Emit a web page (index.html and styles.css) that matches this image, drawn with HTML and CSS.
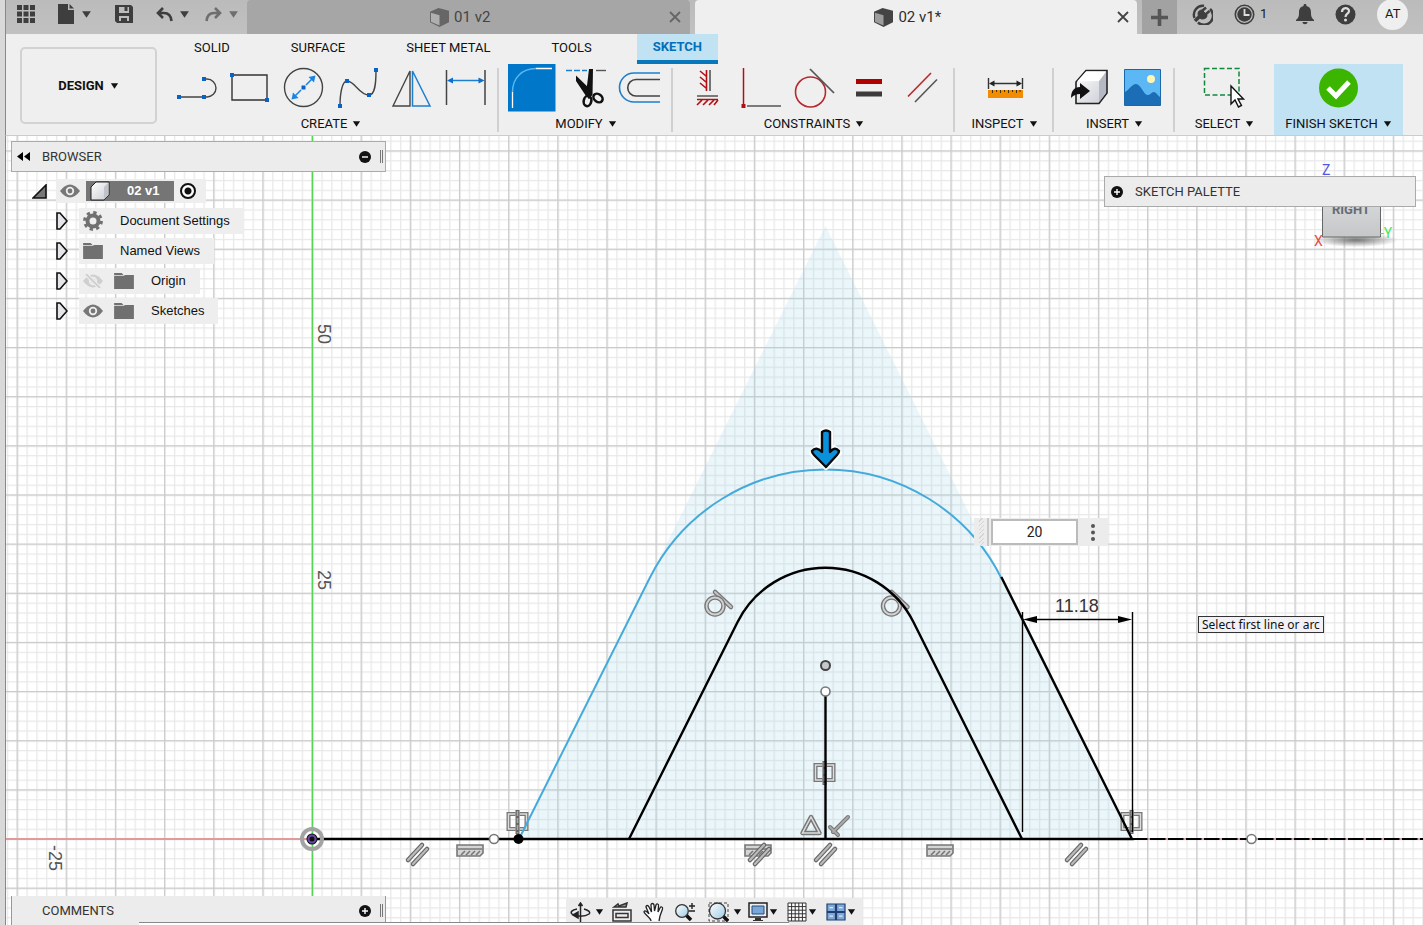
FILE: index.html
```html
<!DOCTYPE html>
<html lang="en">
<head>
<meta charset="utf-8">
<title>02 v1*</title>
<link rel="stylesheet" href="styles.css">
</head>
<body>
<svg class="defs" aria-hidden="true">
  <defs>
    <linearGradient id="cubeFace" x1="0" y1="0" x2="1" y2="1"><stop offset="0" stop-color="#fff"/><stop offset="1" stop-color="#c9ccd3"/></linearGradient>
    <linearGradient id="lens" x1="0" y1="0" x2="1" y2="1"><stop offset="0" stop-color="#fff"/><stop offset="1" stop-color="#9ccbe4"/></linearGradient>
  </defs>
  <symbol id="caret" viewBox="0 0 10 8"><path d="M1 1h8L5 7z" fill="currentColor"/></symbol>
  <symbol id="cube" viewBox="0 0 22 20"><path d="M1 4 10 0l11 3v12l-10 5L1 15z" fill="currentColor"/><path d="M2 5l9 2.500v11L2 14.500z" fill="#fff" opacity=".48"/></symbol>
  <symbol id="close" viewBox="0 0 12 12"><path d="M1 1l10 10M11 1 1 11" stroke="currentColor" stroke-width="1.800" fill="none"/></symbol>
  <symbol id="eye" viewBox="0 0 20 14"><path d="M0 7Q10-6 20 7 10 20 0 7z" fill="currentColor"/><circle cx="10" cy="7" r="4.200" fill="#eee"/><circle cx="10" cy="7" r="2.400" fill="currentColor"/></symbol>
  <symbol id="folder" viewBox="0 0 21 17"><path d="M0 0h8l2 2H0z" fill="currentColor"/><path d="M0 3h10l2-1h9v15H0z" fill="currentColor"/></symbol>
  <symbol id="expand" viewBox="0 0 12 18"><path d="M1 1h3l7 8-7 8H1z" fill="#e6e6ea" stroke="#111" stroke-width="1.600"/></symbol>
  <symbol id="plus-dot" viewBox="0 0 12 12"><circle cx="6" cy="6" r="6"/><path d="M6 3v6M3 6h6" stroke="#fff" stroke-width="1.400"/></symbol>
  <symbol id="minus-dot" viewBox="0 0 12 12"><circle cx="6" cy="6" r="6"/><path d="M3 6h6" stroke="#fff" stroke-width="1.400"/></symbol>
</svg>

<header class="topbar">
  <div class="quick">
    <button class="bare" aria-label="Data panel"><svg width="18" height="18" fill="#3e3e3e"><path d="M0 0h5v5H0zM6.500 0h5v5h-5zM13 0h5v5h-5zM0 6.500h5v5H0zM6.500 6.500h5v5h-5zM13 6.500h5v5h-5zM0 13h5v5H0zM6.500 13h5v5h-5zM13 13h5v5h-5z"/></svg></button>
    <button class="bare pair" aria-label="File"><svg width="17" height="20" fill="#3e3e3e"><path d="M0 0h10v6h6v14H0z"/><path d="M11.500 0 16 4.500h-4.500z"/></svg><svg class="caret"><use href="#caret"/></svg></button>
    <button class="bare" aria-label="Save"><svg width="18" height="18"><path d="M0 0h16l2 2v16H2l-2-2z" fill="#3e3e3e"/><path d="M4 2h10v6H4z" fill="#bdbdbd"/><path d="M9.500 2h3v4h-3z" fill="#3e3e3e"/><path d="M4 11h10v5H4z" fill="#bdbdbd"/><path d="M6 13h6v3H6z" fill="#3e3e3e"/></svg></button>
    <button class="bare pair" aria-label="Undo"><svg width="17" height="15" fill="none" stroke="#3e3e3e" stroke-width="2.600"><path d="M7 1 2 6l5 5M2 6h6c5 0 7 3 7.500 8"/></svg><svg class="caret"><use href="#caret"/></svg></button>
    <button class="bare pair faded" aria-label="Redo"><svg width="17" height="15" fill="none" stroke="#6e6e6e" stroke-width="2.600"><path d="M10 1l5 5-5 5M15 6H9c-5 0-7 3-7.500 8"/></svg><svg class="caret"><use href="#caret"/></svg></button>
  </div>
  <nav class="doc-tabs" aria-label="Documents">
    <div class="doc-tab"><button class="bare doc-name"><svg width="21" height="19"><use href="#cube"/></svg>01 v2</button><button class="bare doc-close" aria-label="Close 01 v2"><svg width="12" height="12"><use href="#close"/></svg></button></div>
    <div class="doc-tab current"><button class="bare doc-name"><svg width="21" height="19"><use href="#cube"/></svg>02 v1*</button><button class="bare doc-close" aria-label="Close 02 v1"><svg width="12" height="12"><use href="#close"/></svg></button></div>
  </nav>
  <div class="session">
    <button class="bare new-tab" aria-label="New design"><svg width="17" height="17"><path d="M8.500 0v17M0 8.500h17" stroke="#555" stroke-width="3.600"/></svg></button>
    <button class="bare" aria-label="Extensions"><svg width="21" height="21" fill="none" stroke="#3e3e3e"><path d="M2.500 14A9 9 0 0 1 12 1.800M18 5A9 9 0 0 1 6 18.500" stroke-width="2.400"/><path d="M3 17l4-4" stroke-width="3.500"/><path d="M6 10c0-3 2-4 4-4l5 5c0 3-2 4-5 4-2 0-4-2-4-5z" fill="#3e3e3e"/><path d="M10 7l4-3.500M13.500 10.500l4-3.500" stroke-width="2.400"/></svg></button>
    <button class="bare jobs" aria-label="Job status"><svg width="21" height="21"><circle cx="10.500" cy="10.500" r="9.200" fill="none" stroke="#3e3e3e" stroke-width="1.600"/><circle cx="10.500" cy="10.500" r="7.200" fill="#3e3e3e"/><path d="M10.500 5v6h5" fill="none" stroke="#ddd" stroke-width="1.800"/></svg>1</button>
    <button class="bare bell" aria-label="Notifications"><svg width="18" height="21" fill="#3e3e3e"><path d="M9 0c1 0 1.500.5 1.500 2C14 3 15 5 15 9c0 4 1 5 3 7v1H0v-1c2-2 3-3 3-7 0-4 1-6 4.500-7C7.500.5 8 0 9 0zM6.500 18h5c0 3-5 3-5 0z"/></svg></button>
    <button class="bare help" aria-label="Help"><svg width="21" height="21"><circle cx="10.500" cy="10.500" r="10" fill="#3e3e3e"/><path d="M7 8c0-5 7-5 7-1 0 3-3.500 2.500-3.500 6" fill="none" stroke="#ddd" stroke-width="2.200"/><circle cx="10.500" cy="16" r="1.500" fill="#ddd"/></svg></button>
    <button class="bare avatar">AT</button>
  </div>
</header>

<div class="ribbon">
  <button class="design">DESIGN <svg class="caret small"><use href="#caret"/></svg></button>
  <div class="ribbon-main">
    <nav class="modes" aria-label="Toolbar tabs">
      <button class="bare mode">SOLID</button><button class="bare mode">SURFACE</button><button class="bare mode">SHEET METAL</button><button class="bare mode">TOOLS</button><button class="bare mode current">SKETCH</button>
    </nav>
    <div class="groups">
      <section class="group">
        <div class="icons">
          <button class="bare tool" aria-label="Line"><svg class="ico"><path d="M7 33h25M32 15h3a9 9 0 0 1 0 18h-3" fill="none" stroke="#444" stroke-width="1.400"/><path d="M5 31h4v4H5zM30 31h4v4h-4zM30 13h4v4h-4z" fill="#0a63c4"/></svg></button>
          <button class="bare tool" aria-label="Rectangle"><svg class="ico"><path d="M6 11h35v25H6z" fill="none" stroke="#333" stroke-width="1.400"/><path d="M4 9h4v4H4zM39 34h4v4h-4z" fill="#0a63c4"/></svg></button>
          <button class="bare tool" aria-label="Circle"><svg class="ico"><circle cx="23.500" cy="23.500" r="19" fill="none" stroke="#444" stroke-width="1.400"/><path d="M13 34 34 13" stroke="#1b86e0" stroke-width="1.600"/><path d="M11.500 35.500l1.500-7 5.500 5.500zM35.500 11.500l-7 1.500 5.500 5.500z" fill="#1b86e0"/><path d="M21 21h5v5h-5z" fill="#0a63c4" stroke="#efefef"/></svg></button>
          <button class="bare tool" aria-label="Spline"><svg class="ico"><path d="M6 42C6 30 8 17 13 17c8 0 12 14 22 14 6 0 7-11 7-25" fill="none" stroke="#444" stroke-width="1.400"/><path d="M4 40h4v4H4zM11 15h4v4h-4zM33 29h4v4h-4zM40 4h4v4h-4z" fill="#0a63c4"/></svg></button>
          <button class="bare tool" aria-label="Mirror"><svg class="ico"><path d="M5 42 22 7v35z" fill="none" stroke="#444" stroke-width="1.400"/><path d="M24.500 7v35H42z" fill="none" stroke="#1b7fd0" stroke-width="1.500"/></svg></button>
          <button class="bare tool" aria-label="Dimension"><svg class="ico"><path d="M4.500 6v35M43 6v35" stroke="#444" stroke-width="1.500"/><path d="M8 16.500h31" stroke="#1b7fd0" stroke-width="1.500"/><path d="M5 16.500l6-3v6zM42.500 16.500l-6-3v6z" fill="#0a6fd0"/></svg></button>
        </div>
        <button class="bare caption">CREATE <svg class="caret small"><use href="#caret"/></svg></button>
      </section>
      <section class="group">
        <div class="icons">
          <button class="bare tool" aria-label="Fillet"><svg class="ico"><path d="M0 0h47.500v47.500H0z" fill="#0077c8"/><path d="M4.500 28C4.500 14 14 4.500 28 4.500" fill="none" stroke="#5ab8f2" stroke-width="1.400"/><path d="M4.500 28v16M28 4.500h16" stroke="#fff" stroke-width="1.300"/></svg></button>
          <button class="bare tool" aria-label="Trim"><svg class="ico"><path d="M4 6.500h21" stroke="#1b7fd0" stroke-width="1.400" stroke-dasharray="6 2"/><path d="M34 6.500h10" stroke="#555" stroke-width="1.400"/><path d="M27 5l4 0-.5 26-4 4-2.500-5z" fill="#111"/><path d="M14 11.500 30 27l-2 8-4-3-10-15z" fill="#111"/><g fill="none" stroke="#111" stroke-width="2.600"><ellipse cx="25.500" cy="37" rx="3.800" ry="5.200" transform="rotate(12 25.500 37)"/><ellipse cx="36" cy="34" rx="5" ry="3.800" transform="rotate(38 36 34)"/></g></svg></button>
          <button class="bare tool" aria-label="Offset"><svg class="ico"><path d="M44 9H18a14.500 14.500 0 0 0 0 29h26" fill="none" stroke="#1b7fd0" stroke-width="1.600"/><path d="M44 15.500H20a8.200 8.200 0 0 0 0 16.500h24" fill="none" stroke="#444" stroke-width="1.600"/></svg></button>
        </div>
        <button class="bare caption">MODIFY <svg class="caret small"><use href="#caret"/></svg></button>
      </section>
      <section class="group">
        <div class="icons">
          <button class="bare tool" aria-label="Horizontal/Vertical"><svg class="ico" fill="none" stroke-width="1.600"><path d="M28 6v21M15 32h21" stroke="#555"/><path d="M24.500 6v21M18 7l6 5M18 13l6 5M18 19l6 5M15 35.500h21M20 36l-5 5M26 36l-5 5M32 36l-5 5M36 36l-4 5" stroke="#b01015"/></svg></button>
          <button class="bare tool" aria-label="Perpendicular"><svg class="ico"><path d="M7.500 4v38" stroke="#b01015" stroke-width="1.500"/><path d="M11 42h34" stroke="#555" stroke-width="1.500"/><path d="M5.500 40h4v4h-4z" fill="#b01015"/></svg></button>
          <button class="bare tool" aria-label="Tangent"><svg class="ico" fill="none"><circle cx="20.500" cy="28" r="15" stroke="#b8282c" stroke-width="1.600"/><path d="M20 5l24 24" stroke="#555" stroke-width="1.700"/></svg></button>
          <button class="bare tool" aria-label="Equal"><svg class="ico"><path d="M12 15h26v5H12z" fill="#b00000"/><path d="M12 27.500h26v5H12z" fill="#3b3b3b"/></svg></button>
          <button class="bare tool" aria-label="Parallel"><svg class="ico"><path d="M10 32.500 33 9" stroke="#b8282c" stroke-width="1.600"/><path d="M17 38l22-22.500" stroke="#555" stroke-width="1.600"/></svg></button>
        </div>
        <button class="bare caption">CONSTRAINTS <svg class="caret small"><use href="#caret"/></svg></button>
      </section>
      <section class="group single">
        <div class="icons">
          <button class="bare tool" aria-label="Measure"><svg class="ico"><path d="M7.500 14v11M41.500 14v11M10 19.500h29" stroke="#333" stroke-width="1.400"/><path d="M8 19.500l5.500-3v6zM41 19.500l-5.500-3v6z" fill="#222"/><path d="M7 26h35v8H7z" fill="#f28c00"/><path d="M11.500 26v3M15.500 26v2M19.500 26v3M23.500 26v2M27.500 26v3M31.500 26v2M35.500 26v3M39 26v2" stroke="#4a2d00"/></svg></button>
        </div>
        <button class="bare caption">INSPECT <svg class="caret small"><use href="#caret"/></svg></button>
      </section>
      <section class="group insert">
        <div class="icons">
          <button class="bare tool" aria-label="Insert derive"><svg class="ico"><path d="M12 18 22 6.500h21V29l-8 10.500H12z" fill="url(#cubeFace)" stroke="#222" stroke-width="1.600"/><path d="M35 17l7-9v21l-7 9z" fill="#b4b9c4"/><path d="M13 17.500 22 7.500h20l-7 9.500z" fill="#fff"/><path d="M7 34c0-7 3-11 9-11v-4l10 8-10 8v-5c-4 0-6 1-9 4z" fill="#111"/></svg></button>
          <button class="bare tool" aria-label="Insert image"><svg class="ico"><path d="M6.500 5.500h36v36h-36z" fill="#5bb8f5" stroke="#1c67a8"/><circle cx="33" cy="15" r="4" fill="#fff6b5"/><path d="M7 28c4-2 7-8 11-8 5 0 8 12 12 11 3 0 3-3 6-3 2 0 4 4 6 5v8H7z" fill="#1b6db5"/></svg></button>
        </div>
        <button class="bare caption">INSERT <svg class="caret small"><use href="#caret"/></svg></button>
      </section>
      <section class="group single last">
        <div class="icons">
          <button class="bare tool" aria-label="Select"><svg class="ico"><path d="M3.500 4.500H38v26.500H3.500z" fill="none" stroke="#12883a" stroke-width="1.500" stroke-dasharray="5 2.500"/><path d="M30 22v18l4-4 3.500 7 3-1.500-3.500-6.500h5.500z" fill="#fff" stroke="#111" stroke-width="1.400"/></svg></button>
        </div>
        <button class="bare caption">SELECT <svg class="caret small"><use href="#caret"/></svg></button>
      </section>
      <section class="group finish">
        <div class="icons">
          <button class="bare tool" aria-label="Finish sketch"><svg class="ico"><circle cx="23.500" cy="24" r="19.500" fill="#3cb500"/><path d="M13 24l8 8 13-14" fill="none" stroke="#fff" stroke-width="5"/></svg></button>
        </div>
        <button class="bare caption">FINISH SKETCH <svg class="caret small"><use href="#caret"/></svg></button>
      </section>
    </div>
  </div>
</div>

<main class="workspace">
  <svg class="canvas" role="img" aria-label="Sketch canvas">
    <defs>
      <pattern id="minor" patternUnits="userSpaceOnUse" x="311.500" y="838.500" width="9.830" height="9.830"><path d="M0 .7h9.830M.7 0v9.830" stroke="#e8e8e8" stroke-width="1.300"/></pattern>
      <pattern id="major" patternUnits="userSpaceOnUse" x="311.500" y="838.500" width="49.150" height="49.150"><path d="M0 .7h49.150M.7 0v49.150" stroke="#cacaca" stroke-width="1.200"/></pattern>
      <g id="parallel" fill="none" stroke-linecap="round"><path d="M-9 6 5-9M-4 10 10-5" stroke="#666" stroke-width="4.500"/><path d="M-9 6 5-9M-4 10 10-5" stroke="#bbb" stroke-width="2.200"/></g>
      <g id="level" fill="none" stroke="#777" stroke-width="1.600"><path d="M-13-5h26v8l-3 3h-23z" fill="#d4d4d4"/><path d="M-12-1h24M-9 5l4-4M-4 5l4-4M1 5l4-4M6 5l4-4"/></g>
      <g id="symmetry" fill="none"><path d="M-2-7h-7V8h7M2-7h7V8H2" stroke="#777" stroke-width="4"/><path d="M-2-7h-7V8h7M2-7h7V8H2" stroke="#ddd" stroke-width="1.400"/><path d="M0-11v24" stroke="#666" stroke-width="4"/><path d="M0-10v22" stroke="#aaa" stroke-width="1.500" stroke-dasharray="5 2"/></g>
      <g id="tangent" fill="none"><path d="M0-14 16 1" stroke="#777" stroke-width="4.500" stroke-linecap="round"/><path d="M0-14 16 1" stroke="#c4c4c4" stroke-width="2" stroke-linecap="round"/><circle r="8.500" stroke="#777" stroke-width="4.500"/><circle r="8.500" stroke="#d2d2d2" stroke-width="1.800"/></g>
    </defs>
    <g transform="translate(-6 -136)">
      <rect x="6" y="136" width="100%" height="100%" fill="url(#minor)"/>
      <rect x="6" y="136" width="100%" height="100%" fill="url(#major)"/>
      <path d="M825.500 226 1132 839H519z" fill="#a0d4ea" opacity=".22"/>
      <path d="M6 839h306M1132 839h2000" stroke="#df9a9a" stroke-width="2"/>
      <path d="M312.500 136v2000" stroke="#55d455" stroke-width="1.400"/>
      <use href="#symmetry" x="517.500" y="821"/><use href="#symmetry" x="824.500" y="772"/><use href="#symmetry" x="1131.500" y="821"/>
      <use href="#tangent" x="715" y="606"/><use href="#tangent" x="891.500" y="606"/>
      <path d="M519 839 649.700 578A196.600 196.600 0 0 1 1001.300 578" fill="none" stroke="#45aadb" stroke-width="2"/>
      <g fill="none" stroke="#000" stroke-width="2.400">
        <path d="M1001.300 577 1132 839H312"/><path d="M629 839 737.600 622a98.300 98.300 0 0 1 175.800 0L1022 839"/><path d="M825.500 696v143"/>
        <path d="M1132 839h2000" stroke-width="2" stroke-dasharray="15.500 2.500"/>
      </g>
      <path d="M1022.500 612v220M1132.500 612v220M1030 619.500h94" stroke="#000" stroke-width="1.400"/>
      <path d="M1023 619.500l14-3.500v7zM1132 619.500l-14-3.500v7z"/>
      <text class="measure" x="1055" y="612">11.18</text>
      <text class="measure axis" transform="translate(318 324) rotate(90)">50</text>
      <text class="measure axis" transform="translate(318 570) rotate(90)">25</text>
      <text class="measure axis" transform="translate(49 845) rotate(90)">-25</text>
      <use href="#parallel" x="417" y="854"/><use href="#level" x="470" y="850"/><use href="#level" x="758" y="850"/><use href="#parallel" x="759" y="854"/><use href="#parallel" x="825" y="854"/><use href="#level" x="940" y="850"/><use href="#parallel" x="1076" y="854"/>
      <path d="M811 817l-8.500 16h17z" fill="none" stroke="#777" stroke-width="4.500" stroke-linejoin="round"/><path d="M811 817l-8.500 16h17z" fill="none" stroke="#ddd" stroke-width="1.500"/>
      <path d="M848 817l-15 15M830 827l8 8" stroke="#777" stroke-width="4" stroke-linecap="round"/><path d="M848 817l-15 15M830 827l8 8" stroke="#aaa" stroke-width="1.800" stroke-linecap="round"/>
      <circle cx="312" cy="839" r="10" fill="none" stroke="#a3a3a3" stroke-width="4"/><circle cx="312" cy="839" r="5.500" fill="#111"/><circle cx="312" cy="839" r="3.500" fill="none" stroke="#654aa5" stroke-width="2"/>
      <circle cx="518.500" cy="839" r="5"/>
      <g fill="#fff" stroke="#777" stroke-width="1.600"><circle cx="494" cy="839" r="4.500"/><circle cx="1251.500" cy="839" r="4.500"/><circle cx="825.500" cy="691.500" r="4.500"/></g>
      <circle cx="825.500" cy="665.500" r="4.500" fill="#c5c9ca" stroke="#444" stroke-width="2"/>
      <g stroke-linejoin="round"><path d="M822 432q4-3 8 0v20l4-4 5 5-13 14-14-14 5-5 5 4z" fill="#fff" stroke="#fff" stroke-width="6"/><path d="M822 432q4-3 8 0v20q5-6 9-1 0 2-2 4l-11 12-12-12q-2-2-2-4 4-5 10 1z" fill="#0a91dd" stroke="#0a0a0a" stroke-width="2.400"/></g>
    </g>
  </svg>

  <aside class="browser">
    <header class="panel-head"><button class="bare" aria-label="Collapse"><svg width="13" height="9"><path d="M6 0v9L0 4.500zM13 0v9L7 4.500z"/></svg></button><h2>BROWSER</h2><button class="bare" aria-label="Minimize browser"><svg class="dot"><use href="#minus-dot"/></svg></button><i class="grip"></i></header>
    <ul class="tree">
      <li class="root"><svg width="15" height="15"><path d="M1 14 14 1v13z" fill="#777" stroke="#111" stroke-width="1.600"/></svg><span class="node"><svg class="eye"><use href="#eye"/></svg><b class="picked"><svg width="20" height="20"><path d="M1 6 6 1h13v13l-5 5H1z" fill="url(#cubeFace)" stroke="#222"/><path d="M14 6l4.500-4.500V14L14 18.500z" fill="#bfc3cb"/></svg>02 v1</b><input type="radio" checked aria-label="Activate 02 v1"></span></li>
      <li><svg class="expand"><use href="#expand"/></svg><span class="node"><svg width="20" height="20"><circle cx="10" cy="10" r="5.500" fill="none" stroke="#707070" stroke-width="4"/><circle cx="10" cy="10" r="8.300" fill="none" stroke="#707070" stroke-width="3.200" stroke-dasharray="3.260 3.260"/></svg><span class="name">Document Settings</span></span></li>
      <li><svg class="expand"><use href="#expand"/></svg><span class="node"><svg class="folder"><use href="#folder"/></svg><span class="name">Named Views</span></span></li>
      <li><svg class="expand"><use href="#expand"/></svg><span class="node"><svg class="eye off"><use href="#eye"/><path d="M3 0l14 14" stroke="#eee" stroke-width="4"/><path d="M3 0l14 14" stroke="#cfcfcf" stroke-width="1.800"/></svg><svg class="folder"><use href="#folder"/></svg><span class="name">Origin</span></span></li>
      <li><svg class="expand"><use href="#expand"/></svg><span class="node"><svg class="eye"><use href="#eye"/></svg><svg class="folder"><use href="#folder"/></svg><span class="name">Sketches</span></span></li>
    </ul>
  </aside>

  <svg class="viewcube" width="100" height="100" role="img" aria-label="View cube">
    <defs><linearGradient id="face" x1="0" y1="0" x2="0" y2="1"><stop offset="0" stop-color="#dfe1e3"/><stop offset="1" stop-color="#c6c7c8"/></linearGradient><radialGradient id="shade"><stop offset="0" stop-color="#777"/><stop offset="1" stop-color="#777" stop-opacity="0"/></radialGradient></defs>
    <ellipse cx="48" cy="79" rx="42" ry="7" fill="url(#shade)"/>
    <path d="M14.500 20h58v56h-58z" fill="url(#face)" stroke="#666"/>
    <text class="face" x="43" y="53" text-anchor="middle">RIGHT</text>
    <text class="ax" x="14" y="14" fill="#5358e0">Z</text><text class="ax" x="6" y="85" fill="#e34b4b">X</text><text class="ax" x="72" y="77" fill="#45e84f">-Y</text>
  </svg>
  <aside class="palette"><button class="bare" aria-label="Expand sketch palette"><svg class="dot"><use href="#plus-dot"/></svg></button><h2>SKETCH PALETTE</h2></aside>

  <div class="radius"><i class="handle"></i><input type="text" value="20" aria-label="Fillet radius"><button class="bare" aria-label="More options"><svg width="4" height="17" fill="#555"><circle cx="2" cy="2" r="2"/><circle cx="2" cy="8.500" r="2"/><circle cx="2" cy="15" r="2"/></svg></button></div>
  <div class="hint" role="tooltip">Select first line or arc</div>

  <aside class="comments"><h2>COMMENTS</h2><button class="bare" aria-label="Expand comments"><svg class="dot"><use href="#plus-dot"/></svg></button><i class="grip"></i></aside>
  <div class="navbar" role="toolbar" aria-label="Navigation">
    <button class="bare pair" aria-label="Orbit"><svg width="21" height="20" fill="none" stroke="#222" stroke-width="1.500"><path d="M10.500 1v19M8.500 4l2-3 2 3M7 7C2 8 0 10 2 12c4 3 13 3 17 0 2-2-1-4-5-5"/><path d="M8 10v6l-5-3z" fill="#222"/></svg><svg class="caret small"><use href="#caret"/></svg></button>
    <button class="bare lone" aria-label="Look at"><svg width="21" height="20" fill="none" stroke="#333" stroke-width="1.500"><path d="M1 8h18v11H1zM4 11.500h12v4H4z"/><path d="M2 5l4-3 1 2 8-3-1 4z" fill="#8aa0ad"/></svg></button>
    <button class="bare lone" aria-label="Pan"><svg width="21" height="20"><path d="M8 19c0-3-6-6-7-9 0-2 3-1 5 2L3 5c0-2 2-2 3 0l2.500 5L8 3c0-2 2.500-2 3 0l.5 6L13 3c.5-2 3-1 2.500 1L15 10l2-4c1-2 3-1 2.500 1L17 14l-1 5" fill="#fff" stroke="#222" stroke-width="1.300"/></svg></button>
    <button class="bare lone" aria-label="Zoom"><svg width="21" height="20"><path d="M12 13l5 5" stroke="#111" stroke-width="3.500"/><circle cx="8" cy="9" r="6.300" fill="url(#lens)" stroke="#333" stroke-width="1.300"/><path d="M15 4h6M18 1v6M15 9h6" stroke="#222" stroke-width="1.400"/></svg></button>
    <button class="bare pair fit" aria-label="Fit"><svg width="21" height="20"><path d="M1 1h19v18H1z" fill="none" stroke="#444" stroke-dasharray="3 2"/><path d="M14 13l6 6" stroke="#111" stroke-width="3.500"/><circle cx="9.500" cy="9" r="8" fill="url(#lens)" stroke="#333" stroke-width="1.300"/></svg><svg class="caret small"><use href="#caret"/></svg></button>
    <button class="bare pair tight" aria-label="Display settings"><svg width="20" height="20"><path d="M1 1h18v14H1z" fill="#eee" stroke="#222" stroke-width="1.500"/><path d="M4 4h12v8H4z" fill="#78a7d8" stroke="#234d80"/><path d="M7 16h6v2h2v1H5v-1h2z" fill="#333"/></svg><svg class="caret small"><use href="#caret"/></svg></button>
    <button class="bare pair tight" aria-label="Grid and snaps"><svg width="20" height="20"><path d="M1 1h18v18H1zM1 4.600h18M1 8.200h18M1 11.800h18M1 15.400h18M4.600 1v18M8.200 1v18M11.800 1v18M15.400 1v18" fill="#fff" stroke="#333"/></svg><svg class="caret small"><use href="#caret"/></svg></button>
    <button class="bare pair tight" aria-label="Viewports"><svg width="20" height="18" fill="#7fa8d8" stroke="#1f3f70" stroke-width="1.200"><path d="M1 1h8.500v7.500H1zM10.500 1H19v7.500h-8.500zM1 9.500h8.500V17H1zM10.500 9.500H19V17h-8.500z"/><path d="M3.500 4.700h3.500M13 4.700h3.500M3.500 13.200h3.500M13 13.200h3.500" stroke="#dce9f7"/></svg><svg class="caret small"><use href="#caret"/></svg></button>
  </div>
  <div class="timeline-edge"></div>
</main>
</body>
</html>
```
FILE: styles.css
```css
* { box-sizing: border-box; }
body {
  margin: 0;
  padding-left: 5px;
  min-height: 100vh;
  display: flex;
  flex-direction: column;
  overflow: hidden;
  background: #d9d9d9;
  color: #1a1a1a;
  font: 13px/16px Roboto, "Liberation Sans", sans-serif;
}
.defs { position: absolute; width: 0; height: 0; }
svg { display: block; flex: none; }
h2 { margin: 0; font-size: 13px; font-weight: 400; color: #333; }
.bare {
  display: flex;
  align-items: center;
  justify-content: center;
  padding: 0;
  border: 0;
  background: none;
  color: inherit;
  font: inherit;
}
.caret { width: 11px; height: 9px; color: #3e3e3e; }
.caret.small { width: 9px; height: 8px; color: #111; }
.dot { width: 12px; height: 12px; fill: #111; }
.grip { width: 3px; height: 13px; border: solid #777; border-width: 0 1px; }
.topbar, .ribbon, .workspace { border-left: 1px solid #888; }

/* Title bar */
.topbar { display: flex; height: 34px; background: linear-gradient(#bbb, #c1c1c1); }
.quick { display: flex; align-items: center; width: 241px; padding: 0 0 6px 11px; gap: 23px; }
.quick .pair { gap: 6px; }
.quick .faded { margin-left: -8px; }
.faded .caret { color: #6e6e6e; }
.doc-tabs { display: flex; flex: 1; gap: 5px; padding-right: 5px; }
.doc-tab { display: flex; flex: 1; padding-left: 12px; background: #a6a6a6; color: #444; border-radius: 4px 4px 0 0; }
.doc-tab.current { background: #efefef; color: #2e2e2e; }
.doc-name { flex: 1; gap: 4px; font-size: 15px; }
.doc-tab svg { color: #666; }
.doc-tab.current svg { color: #444; }
.doc-close { width: 29px; }
.session { display: flex; width: 281px; align-items: center; gap: 21px; }
.session .bare { margin-bottom: 6px; }
.session .new-tab { width: 35px; height: 34px; margin: 0 -6px 0 0; background: #a2a2a2; }
.session .jobs { gap: 5px; margin-right: 8px; }
.session .avatar { width: 31px; height: 31px; border-radius: 50%; background: #efefef; }

/* Ribbon */
.ribbon {
  display: flex;
  padding-left: 14px;
  background: #efefef;
  border-bottom: 1px solid #ccc;
  color: #111;
}
.design {
  width: 137px;
  height: 77px;
  margin: 13px 6px 0 0;
  display: flex;
  align-items: center;
  justify-content: center;
  gap: 6px;
  border: 2px solid #d2d2d2;
  border-radius: 5px;
  background: #efefef;
  color: #111;
  font: 700 13px/16px Roboto, sans-serif;
}
.ribbon-main { flex: 1; }
.modes { display: flex; gap: 29px; height: 30px; padding-left: 15px; }
.mode { padding: 0 16px 2px; }
.mode.current { padding-bottom: 0; border-bottom: 4px solid #0878bd; background: #c0e2f2; color: #0070ba; font-weight: 700; }
.groups { display: flex; }
.group {
  padding: 0 6px;
  background: linear-gradient(#d0d0d0, #d0d0d0) right 4px / 2px 64px no-repeat;
}
.group.single { width: 99px; }
.group.insert { width: 121px; }
.group.last { background: none; }
.group.finish { width: 129px; background: #c0e2f2; }
.icons { display: flex; justify-content: center; height: 48px; }
.tool { width: 54px; }
.ico { width: 48px; height: 48px; }
.caption { width: 100%; height: 23px; gap: 5px; white-space: nowrap; }

/* Canvas and floating panels */
.workspace { position: relative; flex: 1; background: #fff; }
.canvas { position: absolute; inset: 0; width: 100%; height: 100%; }
.measure { font: 18px "Liberation Sans", Arial, sans-serif; fill: #333; }
.axis { fill: #555; }
.browser { position: absolute; left: 5px; top: 5px; width: 375px; }
.panel-head { display: flex; align-items: center; height: 31px; padding: 0 2px 0 5px; gap: 12px; border: 1px solid #aaa; background: #ececec; }
.panel-head h2 { flex: 1; }
.panel-head .bare + .grip, .comments .bare + .grip { margin-left: -3px; }
.tree { margin: 4px 0 0; padding: 0; list-style: none; font: 13px/16px "Liberation Sans", Arial, sans-serif; color: #111; }
.tree li { display: flex; align-items: center; gap: 17px; height: 30px; padding-left: 45px; }
.tree .root { gap: 9px; padding-left: 21px; }
.expand { width: 12px; height: 18px; margin-right: -6px; }
.node { display: flex; align-items: center; height: 26px; padding: 0 14px 0 4px; gap: 11px; background: #eee; }
.root .node { gap: 6px; padding: 0 10px 0 4px; height: 24px; }
.eye { width: 20px; height: 14px; color: #777; }
.eye.off { color: #cfcfcf; }
.folder { width: 20px; height: 16px; color: #707070; }
.name { margin-left: 6px; }
.picked { display: flex; align-items: center; gap: 17px; width: 88px; height: 20px; padding-left: 4px; background: #757575; color: #fff; }
.tree input { appearance: none; width: 16px; height: 16px; margin: 0; border: 2px solid #111; border-radius: 50%; background: radial-gradient(circle, #111 3px, #fff 4px); }
.viewcube { position: absolute; right: 15px; top: 25px; }
.face { font: 700 13px Roboto, sans-serif; fill: #666c75; }
.ax { font: 14px Roboto, sans-serif; }
.palette { position: absolute; right: 7px; top: 40px; display: flex; align-items: center; gap: 12px; width: 312px; height: 31px; padding-left: 6px; border: 1px solid #aaa; background: #ececec; }
.radius { position: absolute; left: 968px; top: 382px; display: flex; width: 134px; height: 28px; background: #ececec; }
.handle { width: 15px; margin-right: 2px; border-right: 2px solid #c8c8c8; background: repeating-linear-gradient(135deg, transparent 0 2px, #d4d4d4 2px 3px) 5px 0 / 5px 100% no-repeat; }
.radius input { width: 87px; margin: 1px 0; padding: 0; border: 2px solid #bbb; background: #fff; font: 14px/16px Roboto, sans-serif; text-align: center; color: #222; }
.radius .bare { flex: 1; }
.hint { position: absolute; left: 1192px; top: 480px; padding: 0 3px; border: 1px solid #333; background: #f2f2f6; font: 12px/15px "Noto Sans", sans-serif; color: #111; white-space: nowrap; }
.comments { position: absolute; left: 5px; bottom: 0; display: flex; align-items: center; gap: 12px; width: 375px; height: 29px; padding: 0 2px 0 30px; border: solid #999; border-width: 0 1px; background: #ececec; }
.comments h2 { flex: 1; }
.navbar { position: absolute; left: 560px; bottom: 0; display: flex; align-items: center; gap: 6px; width: 296px; height: 27px; padding-left: 4px; background: #ececec; }
.navbar .pair { gap: 4px; }
.navbar .lone { width: 25px; }
.navbar .fit { padding-left: 5px; }
.navbar .tight { gap: 1px; margin-right: 3px; }
.timeline-edge { position: absolute; left: 133px; bottom: 0; width: 650px; height: 3px; border-top: 1px solid #888; background: #fff; }
```
